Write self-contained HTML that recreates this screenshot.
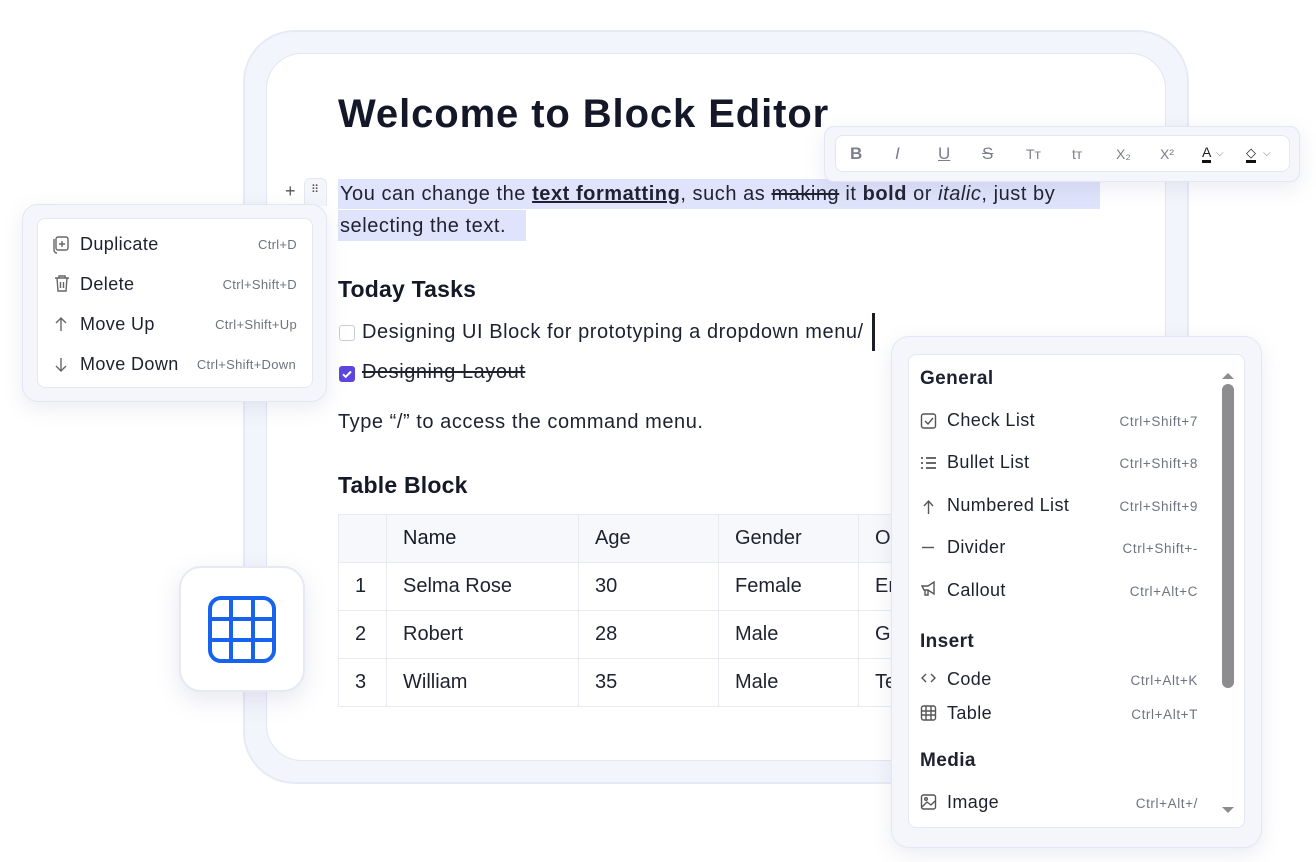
<!DOCTYPE html>
<html><head><meta charset="utf-8"><style>
*{box-sizing:border-box;margin:0;padding:0}
body{width:1316px;height:862px;background:#fff;position:relative;overflow:hidden;font-family:"Liberation Sans",sans-serif;color:#1a1d2b}
.a{position:absolute}
.outer{left:243px;top:30px;width:946px;height:754px;border-radius:52px;background:#f3f5fc;border:2px solid #e6eaf5}
.inner{left:266px;top:53px;width:900px;height:708px;border-radius:36px;background:#fff;border:1.5px solid #e3e7f2}
.t{position:absolute;font-size:20px;white-space:nowrap;color:#1e2130;letter-spacing:0.55px}
.h2{font-weight:bold;font-size:23px;color:#151827;letter-spacing:0.2px}
.hl{background:#dfe3fb}
.panel{background:#f4f6fc;border:1.5px solid #e3e7f2;box-shadow:0 6px 20px rgba(120,130,170,.15)}
.pin{background:#fff;border:1px solid #e5e8f1}
.tb span{position:absolute;top:8px;font-size:17px;color:#7b7f8c}
.mi{position:absolute;font-size:18px;color:#1e2130;letter-spacing:0.4px}
.sc{position:absolute;font-size:13px;color:#6f7380;text-align:right;letter-spacing:0.3px}
.r .sc{font-size:13.5px;letter-spacing:0.6px}
table{border-collapse:collapse;font-size:20px;color:#1e2130}
td{border:1px solid #e8eaf0;height:48px;padding-left:16px}
</style></head><body>
<div class="a outer"></div>
<div class="a inner"></div>

<div class="t" style="left:338px;top:92px;font-size:40px;font-weight:bold;color:#141728;letter-spacing:0.9px">Welcome to Block Editor</div>

<div class="a hl" style="left:338px;top:179px;width:762px;height:30px"></div>
<div class="a hl" style="left:338px;top:210px;width:188px;height:31px"></div>
<div class="t" style="left:340px;top:183px">You can change the <b style="text-decoration:underline">text formatting</b>, such as <s>making</s> it <b>bold</b> or <i>italic</i>, just by</div>
<div class="t" style="left:340px;top:215px">selecting the text.</div>

<div class="a" style="left:304px;top:178px;width:23px;height:28px;background:#f4f6fc;border:1.5px solid #e3e7f2;border-radius:6px 6px 0 0;border-bottom:none"></div>
<div class="t" style="left:285px;top:181px;font-size:18px;color:#555">+</div>
<div class="t" style="left:311px;top:183px;font-size:11px;color:#555;letter-spacing:-1px">⠿</div>

<div class="t h2" style="left:338px;top:276px">Today Tasks</div>
<div class="a" style="left:339px;top:325px;width:16px;height:16px;border:1px solid #c9ccd5;border-radius:3px"></div>
<div class="t" style="left:362px;top:321px">Designing UI Block for prototyping a dropdown menu/</div>
<div class="a" style="left:872px;top:313px;width:3px;height:38px;background:#1a1d2b"></div>
<div class="a" style="left:339px;top:366px;width:16px;height:16px;background:#5b47e0;border-radius:3px"><svg width="16" height="16"><path d="M4 8.3l2.7 2.5L12 5.5" stroke="#fff" stroke-width="2" fill="none"/></svg></div>
<div class="t" style="left:362px;top:361px;text-decoration:line-through">Designing Layout</div>
<div class="t" style="left:338px;top:411px">Type “/” to access the command menu.</div>

<div class="t h2" style="left:338px;top:472px">Table Block</div>
<table class="a" style="left:338px;top:514px;width:600px">
<tr style="background:#f7f8fb"><td style="width:48px"></td><td style="width:192px;color:#151827">Name</td><td style="width:140px">Age</td><td style="width:140px">Gender</td><td>O</td></tr>
<tr><td>1</td><td>Selma Rose</td><td>30</td><td>Female</td><td>Er</td></tr>
<tr><td>2</td><td>Robert</td><td>28</td><td>Male</td><td>G</td></tr>
<tr><td>3</td><td>William</td><td>35</td><td>Male</td><td>Te</td></tr>
</table>

<!-- toolbar -->
<div class="a panel" style="left:824px;top:126px;width:476px;height:56px;border-radius:10px"></div>
<div class="a pin tb" style="left:835px;top:135px;width:455px;height:37px;border-radius:8px">
<span style="left:14px;font-weight:bold">B</span>
<span style="left:59px;font-style:italic">I</span>
<span style="left:102px;text-decoration:underline">U</span>
<span style="left:146px;text-decoration:line-through">S</span>
<span style="left:190px;font-size:14px;top:10px">Tт</span>
<span style="left:236px;font-size:14px;top:10px">tт</span>
<span style="left:280px;font-size:14px;top:10px">X₂</span>
<span style="left:324px;font-size:14px;top:10px">X²</span>
<span style="left:366px;font-size:14px;top:9px;color:#222;border-bottom:3px solid #111;line-height:15px">A</span><span style="left:380px;font-size:10px;top:12px">⌵</span>
<span style="left:410px;font-size:13px;top:9px;color:#222;border-bottom:3px solid #111;line-height:15px">◇</span><span style="left:427px;font-size:10px;top:12px">⌵</span>
</div>

<!-- left menu -->
<div class="a panel" style="left:22px;top:204px;width:305px;height:198px;border-radius:16px"></div>
<div class="a pin" style="left:37px;top:218px;width:276px;height:170px;border-radius:8px"></div>
<svg class="a" style="left:52px;top:234px" width="20" height="140" fill="none" stroke="#666" stroke-width="1.4">
<rect x="4" y="3" width="12" height="13" rx="2"/><path d="M2 5v11a3 3 0 0 0 3 3" /><path d="M10 7v6M7 10h6"/>
<path d="M3 44h14M7 44v-2h6v2M5 44l1 13h8l1-13M8.5 48v6M11.5 48v6"/>
<path d="M9 97V84M4 89l5-5 5 5"/>
<path d="M9 124v13M4 132l5 5 5-5"/>
</svg>
<div class="mi" style="left:80px;top:234px">Duplicate</div><div class="sc" style="right:1019px;top:237px">Ctrl+D</div>
<div class="mi" style="left:80px;top:274px">Delete</div><div class="sc" style="right:1019px;top:277px">Ctrl+Shift+D</div>
<div class="mi" style="left:80px;top:314px">Move Up</div><div class="sc" style="right:1019px;top:317px">Ctrl+Shift+Up</div>
<div class="mi" style="left:80px;top:354px">Move Down</div><div class="sc" style="right:1020px;top:357px">Ctrl+Shift+Down</div>

<!-- table icon -->
<div class="a" style="left:179px;top:566px;width:126px;height:126px;border-radius:22px;background:#fff;border:2px solid #e6e9f3;box-shadow:0 8px 24px rgba(120,130,170,.18)"></div>
<svg class="a" style="left:208px;top:596px" width="68" height="67" fill="none" stroke="#1763f0" stroke-width="4"><rect x="2" y="2" width="64" height="63" rx="11"/><path d="M23 2v63M45 2v63M2 23h64M2 44h64"/></svg>

<!-- right menu -->
<div class="r">
<div class="a panel" style="left:891px;top:336px;width:371px;height:512px;border-radius:18px"></div>
<div class="a pin" style="left:908px;top:354px;width:337px;height:474px;border-radius:8px"></div>
<div class="a" style="left:1222px;top:384px;width:12px;height:304px;border-radius:6px;background:#8d8d8f"></div>
<div class="a" style="left:1222px;top:373px;width:0;height:0;border:6px solid transparent;border-bottom-color:#8d8d8f;border-top:0"></div>
<div class="a" style="left:1222px;top:807px;width:0;height:0;border:6px solid transparent;border-top-color:#8d8d8f;border-bottom:0"></div>
<div class="mi" style="left:920px;top:368px;font-weight:bold;font-size:19px">General</div>
<div class="mi" style="left:920px;top:631px;font-weight:bold;font-size:19px">Insert</div>
<div class="mi" style="left:920px;top:750px;font-weight:bold;font-size:19px">Media</div>
<svg class="a" style="left:920px;top:410px" width="18" height="400" fill="none" stroke="#555" stroke-width="1.4">
<rect x="1.5" y="4" width="14" height="14" rx="2"/><path d="M5 11l3 3 5-6"/>
<path d="M1 48h2M1 53h2M1 58h2M6 48h10M6 53h10M6 58h10" stroke-width="1.8"/>
<path d="M8.5 104V91M4 96l4.5-5 4.5 5"/>
<path d="M2 137.5h12"/>
<path d="M2 176h6l6-4v12l-6-4H4zM5 180v5h3v-5"/>
<path d="M6 264l-4 4 4 4M11 264l4 4-4 4"/>
<rect x="1.5" y="296" width="14" height="14" rx="2"/><path d="M6 296v14M11 296v14M1.5 301h14M1.5 305h14"/>
<rect x="1.5" y="385" width="14" height="14" rx="2"/><path d="M2 397l5-5 4 3 4-4"/><circle cx="6" cy="389" r="1.3"/>
</svg>
<div class="mi" style="left:947px;top:410px">Check List</div><div class="sc" style="right:118px;top:414px">Ctrl+Shift+7</div>
<div class="mi" style="left:947px;top:452px">Bullet List</div><div class="sc" style="right:118px;top:456px">Ctrl+Shift+8</div>
<div class="mi" style="left:947px;top:495px">Numbered List</div><div class="sc" style="right:118px;top:499px">Ctrl+Shift+9</div>
<div class="mi" style="left:947px;top:537px">Divider</div><div class="sc" style="right:118px;top:541px">Ctrl+Shift+-</div>
<div class="mi" style="left:947px;top:580px">Callout</div><div class="sc" style="right:118px;top:584px">Ctrl+Alt+C</div>
<div class="mi" style="left:947px;top:669px">Code</div><div class="sc" style="right:118px;top:673px">Ctrl+Alt+K</div>
<div class="mi" style="left:947px;top:703px">Table</div><div class="sc" style="right:118px;top:707px">Ctrl+Alt+T</div>
<div class="mi" style="left:947px;top:792px">Image</div><div class="sc" style="right:118px;top:796px">Ctrl+Alt+/</div>
</div>
</body></html>
